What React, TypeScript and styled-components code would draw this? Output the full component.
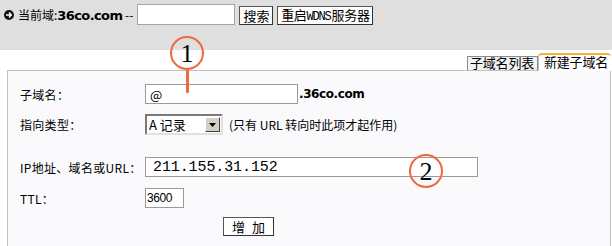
import React from "react";
import styled, { createGlobalStyle } from "styled-components";

const GlobalStyle = createGlobalStyle`
  html, body {
    margin: 0;
    padding: 0;
    background: #ffffff;
    overflow: hidden;
  }
  body {
    font-family: "Liberation Sans", "Noto Sans CJK SC", sans-serif;
    font-size: 12px;
    color: #000;
  }
`;

const Page = styled.div`
  position: relative;
  width: 612px;
  height: 246px;
  overflow: hidden;
`;

const TopBar = styled.div`
  height: 50px;
  background: #dfdfdf;
  display: flex;
  align-items: flex-start;
  padding: 4px 0 0 4px;
  box-sizing: border-box;
  white-space: nowrap;
`;

const Bullet = styled.span`
  width: 10px;
  height: 10px;
  margin-top: 6px;
  border-radius: 50%;
  background: #111;
  display: flex;
  align-items: center;
  justify-content: center;
`;

const Current = styled.span`
  margin-left: 4px;
  margin-top: 3px;
  font-size: 12px;
  font-family: "Noto Sans CJK SC", sans-serif;
  line-height: 16px;
`;

const Domain = styled.b`
  font-family: "DejaVu Sans", sans-serif;
  font-size: 13px;
  letter-spacing: -0.6px;
`;

const SearchInput = styled.input`
  margin-left: 4px;
  width: 98px;
  height: 21px;
  box-sizing: border-box;
  border: 1px solid #a5a5a5;
  background: #fff;
  padding: 0 3px;
  outline: none;
`;

const Btn = styled.button<{ $w: number }>`
  width: ${(p) => p.$w}px;
  height: 19px;
  margin-top: 2px;
  margin-left: 4px;
  box-sizing: border-box;
  border: 1px solid #555;
  border-right-color: #333;
  border-bottom-color: #333;
  background: #fff;
  font-family: "Noto Sans CJK SC", sans-serif;
  font-size: 13px;
  line-height: 15px;
  padding: 0;
  color: #000;
  white-space: nowrap;
  overflow: hidden;
  cursor: pointer;
`;

const WideBtn = styled(Btn)`
  letter-spacing: -0.3px;
`;

const Mono = styled.span`
  font-family: "Liberation Mono", monospace;
  font-size: 12px;
  letter-spacing: -1.2px;
  margin-right: 1px;
`;

const Main = styled.div`
  padding-left: 7px;
  padding-right: 1px;
`;

const TabBar = styled.div`
  display: flex;
  align-items: flex-end;
  height: 21px;
  white-space: nowrap;
`;

const TabLine = styled.div`
  flex: 1;
  border-bottom: 1px solid #c2c2c2;
`;

const Tab = styled.div<{ $active?: boolean }>`
  box-sizing: border-box;
  font-family: "Noto Sans CJK SC", sans-serif;
  font-size: 13px;
  letter-spacing: -0.2px;
  ${(p) =>
    p.$active
      ? `
    height: 18px;
    width: 73px;
    background: #fff;
    border-top: 2px solid #f3b23c;
    border-left: 1px solid #c2c2c2;
    border-radius: 4px 4px 0 0;
    line-height: 14px;
    padding-left: 5px;
  `
      : `
    height: 15px;
    width: 71px;
    background: #f2f2f2;
    border: 1px solid #8a8a8a;
    border-bottom: 1px solid #c2c2c2;
    line-height: 12px;
    padding-left: 2px;
  `}
`;

const Panel = styled.div`
  height: 200px;
  background: #fafafd;
  border: 1px solid #c2c2c2;
  border-top: none;
  padding: 13px 0 0 12px;
`;

const Row = styled.div<{ $mt?: number }>`
  display: flex;
  align-items: center;
  white-space: nowrap;
  margin-top: ${(p) => p.$mt ?? 0}px;
`;

const Label = styled.div`
  width: 125px;
  font-family: "Noto Sans CJK SC", sans-serif;
  font-size: 12px;
  letter-spacing: 0.3px;
`;

const TextInput = styled.input<{ $w: number }>`
  width: ${(p) => p.$w}px;
  height: 20px;
  box-sizing: border-box;
  border: 1px solid #9a9a9a;
  background: #fff;
  outline: none;
  padding: 0 4px;
  font-family: "Noto Sans CJK SC", sans-serif;
  font-size: 13px;
  color: #000;
`;

const IpInput = styled(TextInput)`
  padding-left: 7px;
  font-family: "Liberation Mono", monospace;
  font-size: 15px;
  letter-spacing: -0.1px;
`;

const TtlInput = styled(TextInput)`
  padding: 0 1px;
  font-family: "Liberation Sans", sans-serif;
  font-size: 12px;
  letter-spacing: -0.4px;
`;

const Suffix = styled.b`
  margin-left: 1px;
  font-family: "DejaVu Sans", sans-serif;
  font-size: 12px;
  letter-spacing: -0.4px;
`;

const Select = styled.div`
  width: 78px;
  height: 21px;
  box-sizing: border-box;
  border: 2px solid;
  border-color: #7a7a7a #e0e0e0 #e0e0e0 #7a7a7a;
  background: #fff;
  display: flex;
  align-items: center;
  justify-content: space-between;
  padding-left: 2px;
  font-family: "Noto Sans CJK SC", sans-serif;
  font-size: 13px;
`;

const Arrow = styled.span`
  width: 15px;
  height: 15px;
  margin-right: 1px;
  box-sizing: border-box;
  background: #d4d0c8;
  border: 1px solid;
  border-color: #fff #404040 #404040 #fff;
  display: flex;
  align-items: center;
  justify-content: center;
`;

const Note = styled.span`
  margin-left: 6px;
  font-family: "Noto Sans CJK SC", sans-serif;
  font-size: 12px;
`;

const AddRow = styled.div`
  margin: 9px 0 0 203px;
`;

const AddBtn = styled(Btn)`
  height: 19px;
  margin: 0;
  letter-spacing: 7px;
  padding-left: 7px;
`;

const Marker = styled.div<{ $x: number; $y: number }>`
  position: absolute;
  left: ${(p) => p.$x - 17}px;
  top: ${(p) => p.$y - 17}px;
  width: 34px;
  height: 34px;
  box-sizing: border-box;
  border: 2px solid #f0693c;
  border-radius: 50%;
  display: flex;
  align-items: center;
  justify-content: center;
  font-family: "Liberation Serif", serif;
  font-size: 26px;
  line-height: 1;
  padding-top: 2px;
  pointer-events: none;
`;

const Stem = styled.div`
  position: absolute;
  left: 186px;
  top: 70px;
  width: 3px;
  height: 23px;
  background: #f0693c;
  border-radius: 1px;
`;

export default function App() {
  return (
    <Page>
      <GlobalStyle />
      <TopBar>
        <Bullet>
          <svg width="8" height="8" viewBox="0 0 8 8">
            <path d="M1 4h5M4 1.6L6.3 4 4 6.4" stroke="#fff" strokeWidth="1.4" fill="none" />
          </svg>
        </Bullet>
        <Current>
          当前域:<Domain>36co.com</Domain> --
        </Current>
        <SearchInput />
        <Btn $w={34}>搜索</Btn>
        <WideBtn $w={96}>
          重启<Mono>WDNS</Mono>服务器
        </WideBtn>
      </TopBar>
      <Main>
        <TabBar>
          <TabLine />
          <Tab>子域名列表</Tab>
          <Tab $active>新建子域名</Tab>
        </TabBar>
        <Panel>
          <Row>
            <Label>子域名：</Label>
            <TextInput $w={153} defaultValue="@" />
            <Suffix>.36co.com</Suffix>
          </Row>
          <Row $mt={10}>
            <Label>指向类型：</Label>
            <Select>
              <span>A 记录</span>
              <Arrow>
                <svg width="7" height="4" viewBox="0 0 7 4">
                  <path d="M0 0h7L3.5 4z" fill="#000" />
                </svg>
              </Arrow>
            </Select>
            <Note>(只有 URL 转向时此项才起作用)</Note>
          </Row>
          <Row $mt={22}>
            <Label>IP地址、域名或URL：</Label>
            <IpInput $w={333} defaultValue="211.155.31.152" />
          </Row>
          <Row $mt={11}>
            <Label>TTL：</Label>
            <TtlInput $w={39} defaultValue="3600" />
          </Row>
          <AddRow>
            <AddBtn $w={51}>增加</AddBtn>
          </AddRow>
        </Panel>
      </Main>
      <Marker $x={187} $y={53}>1</Marker>
      <Stem />
      <Marker $x={426} $y={171}>2</Marker>
    </Page>
  );
}
